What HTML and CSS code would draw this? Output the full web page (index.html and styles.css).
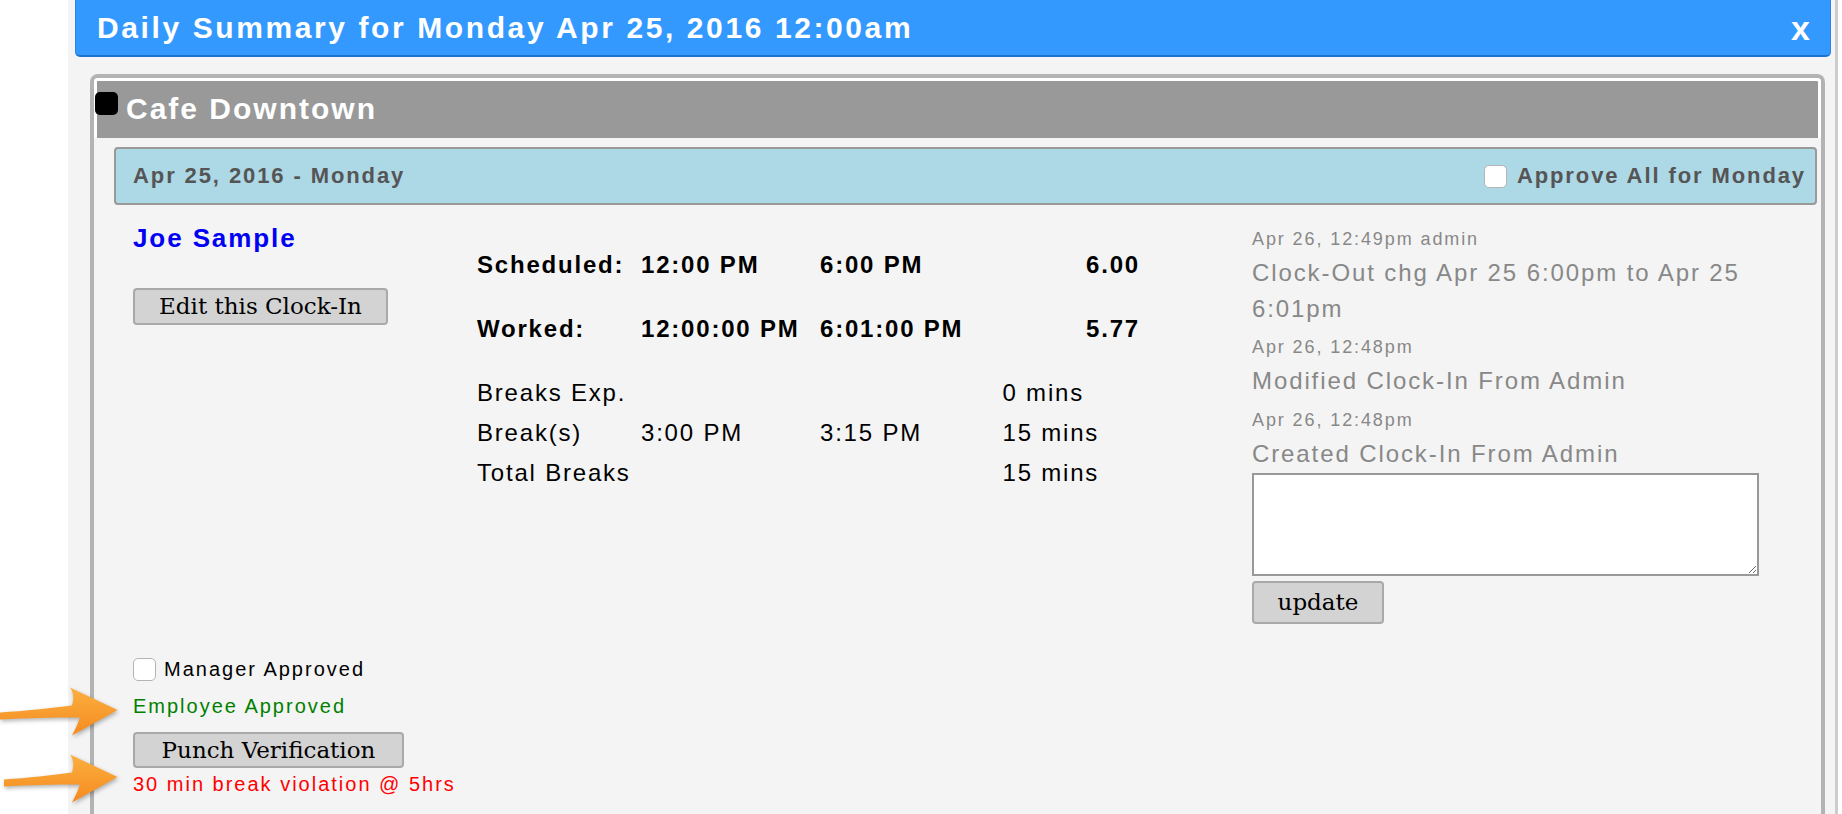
FILE: index.html
```html
<!DOCTYPE html>
<html lang="en">
  <head>
    <meta charset="UTF-8" />
    <title>Daily Summary</title>
    <link rel="stylesheet" href="styles.css">
  </head>
  <body>
    <div class="modal">
      <div class="titlebar">
        <h1>Daily Summary for Monday Apr 25, 2016 12:00am</h1>
        <span class="close">x</span>
      </div>

      <div class="location">
        <div class="location-head"><span class="marker"></span>Cafe Downtown</div>

        <div class="day-bar">
          <span>Apr 25, 2016 - Monday</span>
          <label class="approve-all"><input type="checkbox" class="check" /> Approve All for Monday</label>
        </div>

        <div class="entry">
          <div class="employee">
            <a href="#" class="name">Joe Sample</a>
            <button class="btn edit-btn">Edit this Clock-In</button>
            <div class="approvals">
              <label class="check-row"><input type="checkbox" class="check" /> Manager Approved</label>
              <div class="emp-approved">Employee Approved</div>
              <button class="btn punch-btn">Punch Verification</button>
              <div class="violation">30 min break violation @ 5hrs</div>
            </div>
          </div>

          <div class="times">
            <span class="bold">Scheduled:</span>
            <span class="bold">12:00 PM</span>
            <span class="bold">6:00 PM</span>
            <span class="bold total">6.00</span>

            <span class="bold">Worked:</span>
            <span class="bold">12:00:00 PM</span>
            <span class="bold">6:01:00 PM</span>
            <span class="bold total">5.77</span>

            <span>Breaks Exp.</span>
            <span></span>
            <span></span>
            <span>0 mins</span>

            <span>Break(s)</span>
            <span>3:00 PM</span>
            <span>3:15 PM</span>
            <span>15 mins</span>

            <span>Total Breaks</span>
            <span></span>
            <span></span>
            <span>15 mins</span>
          </div>

          <div class="log">
            <div class="log-item">
              <div class="log-meta">Apr 26, 12:49pm admin</div>
              <div class="log-note">Clock-Out chg Apr 25 6:00pm to Apr 25 6:01pm</div>
            </div>
            <div class="log-item">
              <div class="log-meta">Apr 26, 12:48pm</div>
              <div class="log-note">Modified Clock-In From Admin</div>
            </div>
            <div class="log-item">
              <div class="log-meta">Apr 26, 12:48pm</div>
              <div class="log-note">Created Clock-In From Admin</div>
            </div>
            <textarea></textarea>
            <button class="btn update-btn">update</button>
          </div>
        </div>
      </div>
    </div>

    <!-- annotation arrows -->
    <svg class="arrow arrow-one" width="120" height="52" viewBox="0 0 120 52">
      <defs>
        <linearGradient id="orangeA" x1="0" y1="0" x2="0" y2="1">
          <stop offset="0" stop-color="#fbb040" />
          <stop offset="1" stop-color="#f58a1f" />
        </linearGradient>
      </defs>
      <path d="M0,26.5 C25,25 50,22 72,19.5 C74,13 74,7 70,1.5 L117.5,24 L72,49.5 C76,42 78,37 80,31.5 C52,31.5 25,32 0,33.5 Z" fill="url(#orangeA)" />
    </svg>
    <svg class="arrow arrow-two" width="120" height="52" viewBox="0 0 120 52">
      <defs>
        <linearGradient id="orangeB" x1="0" y1="0" x2="0" y2="1">
          <stop offset="0" stop-color="#fbb040" />
          <stop offset="1" stop-color="#f58a1f" />
        </linearGradient>
      </defs>
      <path d="M4,26.5 C28,25 52,22 72,19.5 C74,13 74,7 70,1.5 L117.5,24 L72,49.5 C76,42 78,37 80,31.5 C54,31.5 30,32 4,33.5 Z" fill="url(#orangeB)" />
    </svg>
  </body>
</html>
```

FILE: styles.css
```css
body {
  margin: 0;
  background-color: #ffffff;
  font-family: "Liberation Sans", Arial, Helvetica, sans-serif;
  letter-spacing: 1.9px;
  overflow: hidden;
}
.modal {
  margin-left: 68px;
  width: 1767px;
  height: 814px;
  background-color: #f4f4f4;
  border-right: 3px solid #cdcdcd;
  overflow: hidden;
}
.titlebar {
  display: flex;
  justify-content: space-between;
  align-items: center;
  height: 55px;
  margin: 0 4px 0 7px;
  padding: 0 20px 0 21px;
  background-color: #3399ff;
  border: 1px solid #2a86e6;
  border-top: 0;
  border-bottom: 2px solid #1a73d1;
  border-radius: 0 0 5px 5px;
  color: #ffffff;
}
.titlebar h1 {
  margin: 0;
  font-size: 30px;
  letter-spacing: 2.6px;
}
.close {
  font-size: 34px;
  font-weight: bold;
  line-height: 1;
  letter-spacing: 0;
}
.location {
  margin: 17px 0 0 22px;
  width: 1727px;
  height: 800px;
  border: 4px solid #b3b3b3;
  border-bottom: 0;
  border-radius: 8px 8px 0 0;
}
.location-head {
  position: relative;
  height: 57px;
  line-height: 56px;
  padding-left: 29px;
  border: 3px solid #ffffff;
  border-bottom: 0;
  border-radius: 4px 4px 0 0;
  background-color: #999999;
  color: #ffffff;
  font-size: 30px;
  font-weight: bold;
  letter-spacing: 2px;
}
.marker {
  position: absolute;
  left: -2px;
  top: 11px;
  width: 23px;
  height: 23px;
  background-color: #000000;
  border-radius: 5px;
}
.day-bar {
  display: flex;
  justify-content: space-between;
  align-items: center;
  height: 54px;
  margin: 9px 4px 0 20px;
  padding: 0 9px 0 17px;
  background-color: #add8e6;
  border: 2px solid #999999;
  border-radius: 4px;
  color: #555555;
  font-size: 22px;
  font-weight: bold;
}
.approve-all {
  display: flex;
  align-items: center;
  gap: 10px;
}
.check {
  -webkit-appearance: none;
  appearance: none;
  width: 23px;
  height: 23px;
  margin: 0;
  background-color: #ffffff;
  border: 1px solid #b4b4b4;
  border-radius: 5px;
}
.entry {
  display: flex;
  padding-left: 39px;
}
.employee {
  display: flex;
  flex-direction: column;
  align-items: flex-start;
  width: 344px;
  margin-top: 18px;
}
.name {
  font-size: 26px;
  line-height: 30px;
  font-weight: bold;
  color: #0000f5;
  text-decoration: none;
}
.btn {
  font-family: "DejaVu Serif", serif;
  font-size: 23px;
  line-height: 27px;
  color: #000000;
  background-color: #d3d3d3;
  border: 2px solid #a9a9a9;
  border-radius: 4px;
  padding: 0;
  letter-spacing: 0;
}
.edit-btn {
  width: 255px;
  height: 37px;
  margin-top: 35px;
}
.approvals {
  margin-top: 325px;
  font-size: 20px;
  letter-spacing: 2px;
}
.check-row {
  display: flex;
  align-items: center;
  gap: 8px;
  height: 38px;
  color: #000000;
}
.emp-approved {
  color: #008000;
  line-height: 36px;
}
.punch-btn {
  width: 271px;
  height: 36px;
  margin-top: 8px;
}
.violation {
  color: #ff0000;
  line-height: 30px;
  margin-top: 1px;
}
.times {
  display: grid;
  grid-template-columns: 164px 179px 182.5px 137.5px;
  grid-template-rows: 64px 64px 40px 40px 40px;
  align-content: start;
  width: 775px;
  margin-top: 40px;
  font-size: 24px;
  line-height: 40px;
  letter-spacing: 1.8px;
  color: #000000;
}
.bold {
  font-weight: bold;
}
.total {
  text-align: right;
}
.log {
  width: 520px;
  margin-top: 17.5px;
  color: #888888;
}
.log-meta {
  font-size: 18px;
  line-height: 32px;
}
.log-note {
  font-size: 24px;
  line-height: 36px;
}
.log-item + .log-item {
  margin-top: 4.5px;
}
.log textarea {
  display: block;
  box-sizing: border-box;
  width: 507px;
  height: 103px;
  margin: 1px 0 0 0;
  border: 2px solid #999999;
  background-color: #ffffff;
}
.update-btn {
  display: block;
  width: 132px;
  height: 43px;
  margin-top: 5px;
}
.arrow {
  position: absolute;
  left: 0;
  filter: drop-shadow(1px 2px 2px rgba(0, 0, 0, 0.3));
}
.arrow-one {
  top: 686px;
}
.arrow-two {
  top: 753px;
}
```
